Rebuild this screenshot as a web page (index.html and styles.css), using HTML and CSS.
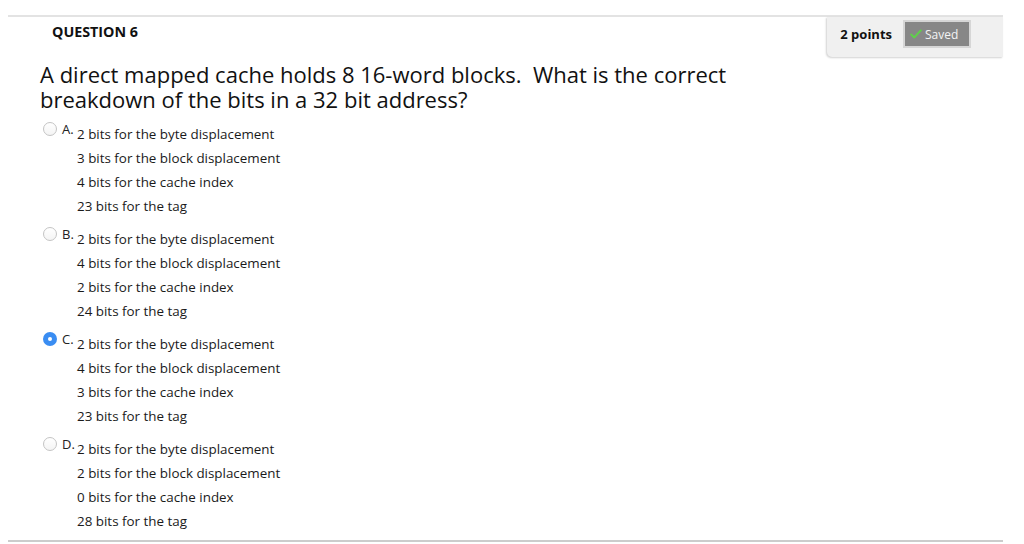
FILE: index.html
```html
<!DOCTYPE html>
<html>
<head>
<meta charset="utf-8">
<link rel="stylesheet" href="styles.css">
</head>
<body>
<div class="question">
  <div class="q-header">
    <h3 class="q-title">QUESTION 6</h3>
    <div class="q-points">
      <span class="points">2 points</span>
      <span class="saved"><svg class="check" width="12" height="10" viewBox="0 0 12 10"><path d="M1.2 5.6 L4.3 8.4 L10.8 1.4" fill="none" stroke="#5fd04a" stroke-width="2" stroke-linecap="round" stroke-linejoin="round"/></svg>Saved</span>
    </div>
  </div>
  <div class="q-text">A direct mapped cache holds 8 16-word blocks.&nbsp; What is the correct breakdown of the bits in a 32 bit address?</div>
  <div class="options">
    <div class="option">
      <span class="radio"></span><span class="letter">A.</span>
      <div class="lines">
        <div>2 bits for the byte displacement</div>
        <div>3 bits for the block displacement</div>
        <div>4 bits for the cache index</div>
        <div>23 bits for the tag</div>
      </div>
    </div>
    <div class="option">
      <span class="radio"></span><span class="letter">B.</span>
      <div class="lines">
        <div>2 bits for the byte displacement</div>
        <div>4 bits for the block displacement</div>
        <div>2 bits for the cache index</div>
        <div>24 bits for the tag</div>
      </div>
    </div>
    <div class="option">
      <span class="radio checked"></span><span class="letter">C.</span>
      <div class="lines">
        <div>2 bits for the byte displacement</div>
        <div>4 bits for the block displacement</div>
        <div>3 bits for the cache index</div>
        <div>23 bits for the tag</div>
      </div>
    </div>
    <div class="option">
      <span class="radio"></span><span class="letter">D.</span>
      <div class="lines">
        <div>2 bits for the byte displacement</div>
        <div>2 bits for the block displacement</div>
        <div>0 bits for the cache index</div>
        <div>28 bits for the tag</div>
      </div>
    </div>
  </div>
</div>
</body>
</html>
```

FILE: styles.css
```css
html, body {
  margin: 0;
  padding: 0;
  background: #ffffff;
}
body {
  font-family: "Open Sans", "Noto Sans", sans-serif;
  color: #1a1a1a;
  padding-top: 15px;
}
.question {
  margin-left: 8px;
  width: 995px;
  border-top: 2px solid #e3e3e3;
  border-bottom: 2px solid #cccccc;
  padding-bottom: 7px;
}
.q-header {
  display: flex;
  justify-content: space-between;
  align-items: flex-start;
}
.q-title {
  margin: 0;
  padding: 6px 0 0 44px;
  font-size: 14.3px;
  line-height: 18px;
  font-weight: 700;
  color: #111;
}
.q-points {
  display: flex;
  align-items: center;
  height: 40px;
  box-sizing: border-box;
  padding: 0 32px 6px 13px;
  background: #f0f0f0;
  border-bottom-left-radius: 5px;
  box-shadow: -1px 1px 2px rgba(0,0,0,0.18);
}
.points {
  font-size: 13px;
  font-weight: 700;
  color: #111;
  margin-right: 11px;
}
.saved {
  display: flex;
  align-items: center;
  height: 28px;
  width: 68px;
  box-sizing: border-box;
  padding-left: 5px;
  background: #878787;
  border: 2px solid #d6d6d6;
  color: #f4f4f4;
  font-size: 12px;
}
.check {
  margin-right: 3px;
}
.q-text {
  margin: 5px 0 0 32px;
  width: 760px;
  font-size: 22px;
  line-height: 25px;
  color: #111;
}
.options {
  margin-top: 10px;
  display: flex;
  flex-direction: column;
  gap: 9px;
}
.option {
  display: flex;
  align-items: flex-start;
  padding-left: 35px;
}
.radio {
  width: 14px;
  height: 14px;
  box-sizing: border-box;
  border-radius: 50%;
  border: 1px solid #c4c4c4;
  background: linear-gradient(#ffffff, #f4f4f4);
  margin-top: 0;
  position: relative;
  flex: none;
}
.radio.checked {
  border: none;
  background: #3a8df2;
}
.radio.checked::after {
  content: "";
  position: absolute;
  left: 5px;
  top: 5px;
  width: 4px;
  height: 4px;
  border-radius: 50%;
  background: #ffffff;
}
.letter {
  width: 15px;
  margin-left: 5px;
  font-size: 13px;
  line-height: 14px;
  color: #222;
  flex: none;
}
.lines {
  font-size: 13.4px;
  line-height: 24px;
  color: #1a1a1a;
}
```
